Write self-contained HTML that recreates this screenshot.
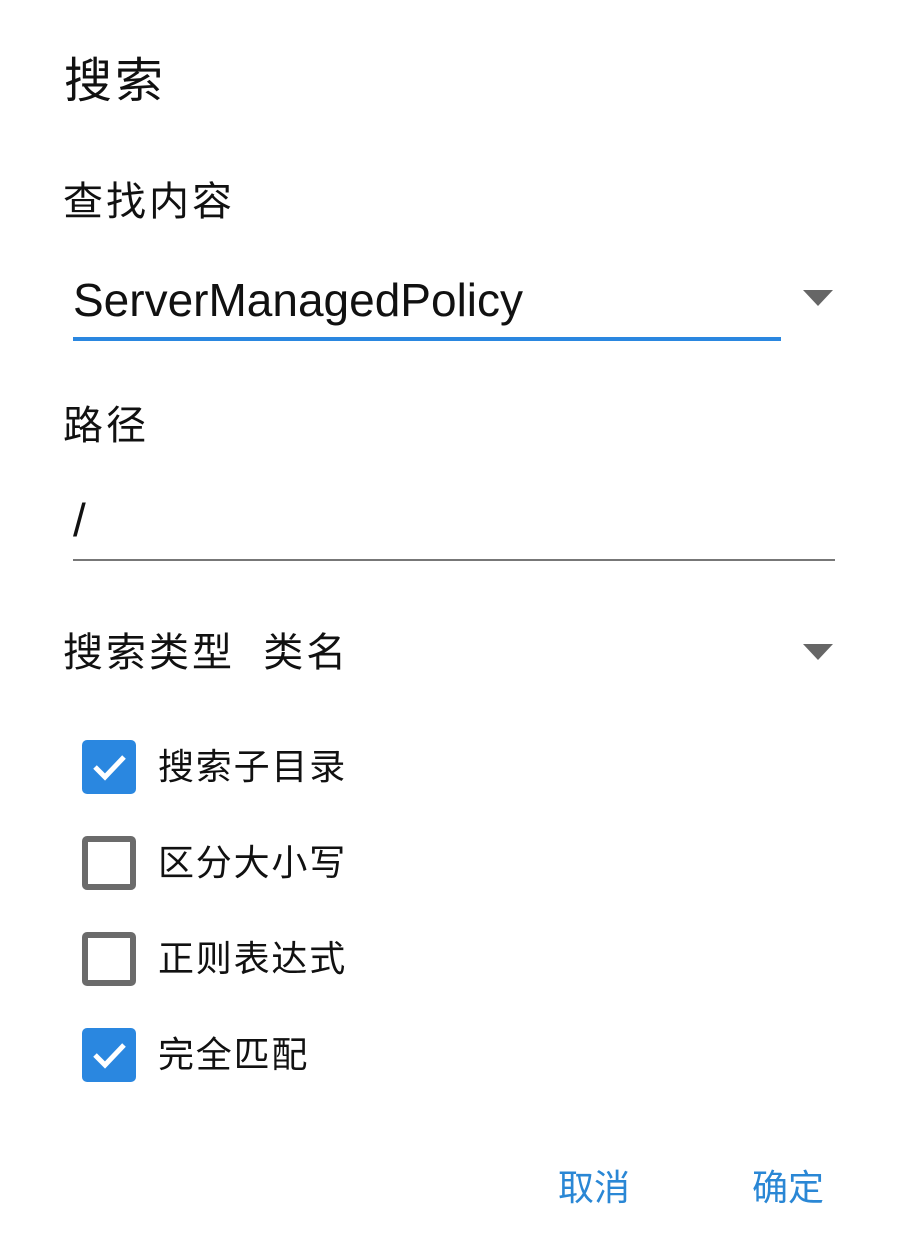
<!DOCTYPE html><html><head><meta charset="utf-8"><style>
body{margin:0;width:904px;height:1258px;background:#fff;position:relative;font-family:"Liberation Sans","Noto Sans CJK SC",sans-serif;color:#111;overflow:hidden}
.a{position:absolute;white-space:nowrap;line-height:1}
.cb{position:absolute;left:82px;width:54px;height:54px;border-radius:5px;box-sizing:border-box}
.on{background:#2a87e0}
.off{border:6px solid #6b6b6b}
.tri{position:absolute;width:0;height:0;border-left:15px solid transparent;border-right:15px solid transparent;border-top:16px solid #666}
.l{font-size:36px;letter-spacing:1.8px}
</style></head><body>
<div class="a" style="left:64px;top:58px;font-size:48px;letter-spacing:3px">搜索</div>
<div class="a" style="left:63px;top:182px;font-size:40px;letter-spacing:3px">查找内容</div>
<div class="a" style="left:73px;top:277px;font-size:46px">ServerManagedPolicy</div>
<div style="position:absolute;left:73px;top:337px;width:708px;height:4px;background:#2a87e0"></div>
<div class="tri" style="left:803px;top:290px"></div>
<div class="a" style="left:63px;top:406px;font-size:40px;letter-spacing:3px">路径</div>
<div class="a" style="left:73px;top:497px;font-size:46px">/</div>
<div style="position:absolute;left:73px;top:559px;width:762px;height:2px;background:#777"></div>
<div class="a" style="left:63px;top:633px;font-size:40px;letter-spacing:3px">搜索类型&nbsp; 类名</div>
<div class="tri" style="left:803px;top:644px"></div>
<div class="cb on" style="top:740px"><svg width="54" height="54"><path d="M13 27l10 10 19-20" fill="none" stroke="#fff" stroke-width="5"/></svg></div>
<div class="a l" style="left:158px;top:749px">搜索子目录</div>
<div class="cb off" style="top:836px"></div>
<div class="a l" style="left:158px;top:845px">区分大小写</div>
<div class="cb off" style="top:932px"></div>
<div class="a l" style="left:158px;top:941px">正则表达式</div>
<div class="cb on" style="top:1028px"><svg width="54" height="54"><path d="M13 27l10 10 19-20" fill="none" stroke="#fff" stroke-width="5"/></svg></div>
<div class="a l" style="left:158px;top:1037px">完全匹配</div>
<div class="a" style="left:558px;top:1170px;font-size:36px;color:#2a87d5">取消</div>
<div class="a" style="left:752px;top:1170px;font-size:36px;color:#2a87d5">确定</div>
</body></html>
